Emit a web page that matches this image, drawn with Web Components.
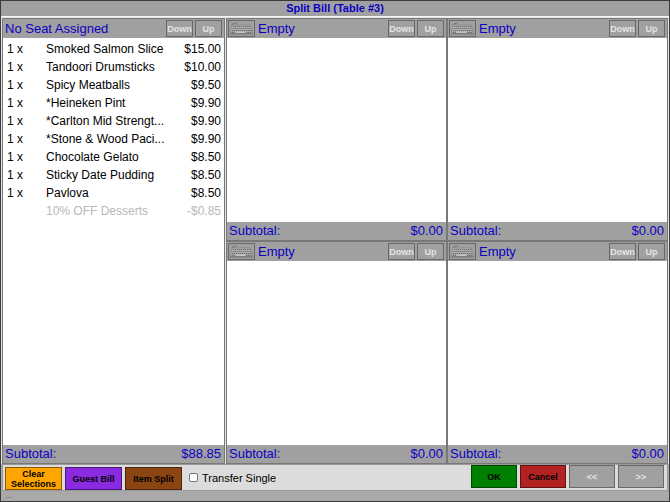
<!DOCTYPE html>
<html lang="en">
<head>
<meta charset="utf-8">
<title>Split Bill</title>
<style>
  html, body {
    height: 100%;
    margin: 0;
  }

  body {
    font-family: "Liberation Sans", Arial, sans-serif;
    font-size: 13px;
    color: #000;
  }
</style>
</head>
<body>
<split-bill heading="Split Bill (Table #3)"></split-bill>

<template id="pos-button-template">
  <style>
    :host {
      display: block;
      --face: #a0a0a0;
      --ink: #000;
    }

    button {
      display: block;
      box-sizing: border-box;
      width: 100%;
      height: 100%;
      margin: 0;
      padding: 0;
      border: 1px solid rgba(0, 0, 0, 0.45);
      border-radius: 0;
      background: var(--face);
      color: var(--ink);
      font: bold 9px/10px "Liberation Sans", Arial, sans-serif;
      white-space: nowrap;
    }

    :host([multiline]) button {
      white-space: normal;
    }

    :host([muted]) {
      --ink: #e4e4e4;
    }

    :host([muted]) button {
      border-color: #686868;
    }
  </style>
  <button type="button"><slot></slot></button>
</template>

<template id="bill-item-template">
  <style>
    :host {
      display: grid;
      grid-template-columns: 39px 1fr 54px;
      font-size: 12px;
      line-height: 18px;
      white-space: nowrap;
    }

    :host([discount]) {
      color: #b8b8b8;
    }

    .name {
      overflow: hidden;
      text-overflow: ellipsis;
    }

    .price {
      text-align: right;
    }
  </style>
  <span class="qty"></span>
  <span class="name"><slot></slot></span>
  <span class="price"></span>
</template>

<template id="seat-panel-template">
  <style>
    :host {
      display: flex;
      flex-direction: column;
      box-sizing: border-box;
      min-width: 0;
      min-height: 0;
      border: 1px solid #787878;
      background: #fff;
    }

    header, footer {
      display: flex;
      align-items: center;
      background: #a0a0a0;
      color: #0c00c4;
      line-height: 18px;
    }

    header {
      height: 19px;
      gap: 2px;
      padding: 0 2px 0 1px;
    }

    h2 {
      flex: 1;
      margin: 0;
      padding-left: 1px;
      font-size: 13px;
      font-weight: normal;
    }

    header pos-button {
      width: 27px;
      height: 17px;
    }

    .keyboard svg {
      display: block;
      width: 25px;
      height: 15px;
    }

    .items {
      flex: 1;
      padding: 2px 3px 0 4px;
    }

    footer {
      justify-content: space-between;
      padding: 0 3px 0 2px;
    }
  </style>
  <header>
    <pos-button class="keyboard" muted>
      <svg viewBox="0 0 25 15" role="img" aria-label="Keyboard">
        <path d="M3 4 C3 1.5 7 3.5 8 1.5" fill="none" stroke="#747474"/>
        <path d="M3 4 H21 L24 12.5 H1 Z" fill="#b4b4b4" stroke="#808080" stroke-width=".7"/>
        <g fill="none" stroke="#686868" stroke-width="1.2" stroke-dasharray="1.4 .6">
          <path d="M4 5.5 H21"/>
          <path d="M3.5 7.5 H21.8"/>
          <path d="M3 9.5 H22.5"/>
          <path d="M2.5 11.3 H6.5 M17 11.3 H23"/>
        </g>
        <path d="M7.5 11.3 H16" stroke="#c8c8c8"/>
        <path d="M1 13 H24" stroke="#747474"/>
      </svg>
    </pos-button>
    <h2></h2>
    <pos-button muted>Down</pos-button>
    <pos-button muted>Up</pos-button>
  </header>
  <div class="items"><slot></slot></div>
  <footer><span>Subtotal:</span><span class="subtotal"></span></footer>
</template>

<template id="split-bill-template">
  <style>
    :host {
      display: flex;
      flex-direction: column;
      box-sizing: border-box;
      height: 100%;
      border: 1px solid #3c3a3c;
      background: #a9a9a9;
    }

    h1 {
      margin: 0;
      background: #a0a0a0;
      color: #0c00c4;
      font-size: 11px;
      line-height: 15px;
      text-align: center;
    }

    main {
      display: grid;
      grid-template-columns: 223fr 442fr;
      flex: 1;
      gap: 1px;
      min-height: 0;
      padding: 1px 1px 0;
      border-top: 1px solid #f4f4f4;
      background: #e4e4e4;
    }

    .seats {
      display: grid;
      grid-template-columns: 1fr 1fr;
      grid-template-rows: 1fr 1fr;
      min-width: 0;
    }

    nav {
      display: flex;
      align-items: center;
      gap: 3px;
      min-height: 25px;
      margin: 0 1px;
      padding: 0 3px 0 2px;
      border: 1px solid #999;
      background: #dcdcdc;
    }

    nav pos-button {
      align-self: flex-end;
      width: 57px;
      height: 23px;
    }

    nav .action {
      align-self: flex-start;
      width: 46px;
    }

    .clear { --face: #ffa500; }
    .guest { --face: #8a2be2; }
    .item { --face: #8b4513; }
    .ok { --face: #008000; }
    .cancel { --face: #b22222; }

    label {
      display: flex;
      flex: 1;
      align-items: center;
      gap: 4px;
      padding-left: 4px;
      font-size: 11px;
    }

    input {
      appearance: none;
      box-sizing: border-box;
      width: 9px;
      height: 9px;
      margin: 0;
      border: 1px solid #777;
      border-radius: 2px;
      background: #fff;
    }

    input:checked {
      background: #0c00c4;
    }

    .status {
      padding-left: 4px;
      color: #505050;
      font-size: 8px;
      line-height: 10px;
    }
  </style>
  <h1></h1>
  <main>
    <seat-panel heading="No Seat Assigned" subtotal="$88.85" unassigned>
      <bill-item qty="1 x" price="$15.00">Smoked Salmon Slice</bill-item>
      <bill-item qty="1 x" price="$10.00">Tandoori Drumsticks</bill-item>
      <bill-item qty="1 x" price="$9.50">Spicy Meatballs</bill-item>
      <bill-item qty="1 x" price="$9.90">*Heineken Pint</bill-item>
      <bill-item qty="1 x" price="$9.90">*Carlton Mid Strengt...</bill-item>
      <bill-item qty="1 x" price="$9.90">*Stone &amp; Wood Paci...</bill-item>
      <bill-item qty="1 x" price="$8.50">Chocolate Gelato</bill-item>
      <bill-item qty="1 x" price="$8.50">Sticky Date Pudding</bill-item>
      <bill-item qty="1 x" price="$8.50">Pavlova</bill-item>
      <bill-item price="-$0.85" discount>10% OFF Desserts</bill-item>
    </seat-panel>
    <div class="seats">
      <seat-panel heading="Empty" subtotal="$0.00"></seat-panel>
      <seat-panel heading="Empty" subtotal="$0.00"></seat-panel>
      <seat-panel heading="Empty" subtotal="$0.00"></seat-panel>
      <seat-panel heading="Empty" subtotal="$0.00"></seat-panel>
    </div>
  </main>
  <nav>
    <pos-button class="clear" multiline>Clear Selections</pos-button>
    <pos-button class="guest">Guest Bill</pos-button>
    <pos-button class="item">Item Split</pos-button>
    <label for="transfer"><input type="checkbox" id="transfer">Transfer Single</label>
    <pos-button class="action ok">OK</pos-button>
    <pos-button class="action cancel">Cancel</pos-button>
    <pos-button class="action" muted>&lt;&lt;</pos-button>
    <pos-button class="action" muted>&gt;&gt;</pos-button>
  </nav>
  <div class="status">...</div>
</template>

<script>
  /**
   * Attach an open shadow root with a copy of the template.
   *
   * @param {HTMLElement} element
   * @param {string} id
   */
  function attachTemplate(element, id) {
    const template = document.getElementById(id)
    element.attachShadow({ mode: 'open' })
      .appendChild(template.content.cloneNode(true))
  }

  customElements.define('pos-button',
    /**
     * Represents a flat touch button.
     */
    class extends HTMLElement {
      constructor() {
        super()
        attachTemplate(this, 'pos-button-template')
      }
    }
  )

  customElements.define('bill-item',
    /**
     * Represents one line on a bill.
     */
    class extends HTMLElement {
      constructor() {
        super()
        attachTemplate(this, 'bill-item-template')
      }

      connectedCallback() {
        this.shadowRoot.querySelector('.qty').textContent = this.getAttribute('qty') || ''
        this.shadowRoot.querySelector('.price').textContent = this.getAttribute('price')
      }
    }
  )

  customElements.define('seat-panel',
    /**
     * Represents a seat with its items and subtotal.
     */
    class extends HTMLElement {
      constructor() {
        super()
        attachTemplate(this, 'seat-panel-template')
      }

      connectedCallback() {
        this.shadowRoot.querySelector('h2').textContent = this.getAttribute('heading')
        this.shadowRoot.querySelector('.subtotal').textContent = this.getAttribute('subtotal')

        if (this.hasAttribute('unassigned')) {
          this.shadowRoot.querySelector('.keyboard')?.remove()
        }
      }
    }
  )

  customElements.define('split-bill',
    /**
     * Represents the split bill screen.
     */
    class extends HTMLElement {
      constructor() {
        super()
        attachTemplate(this, 'split-bill-template')
      }

      connectedCallback() {
        this.shadowRoot.querySelector('h1').textContent = this.getAttribute('heading')
      }
    }
  )
</script>
</body>
</html>
